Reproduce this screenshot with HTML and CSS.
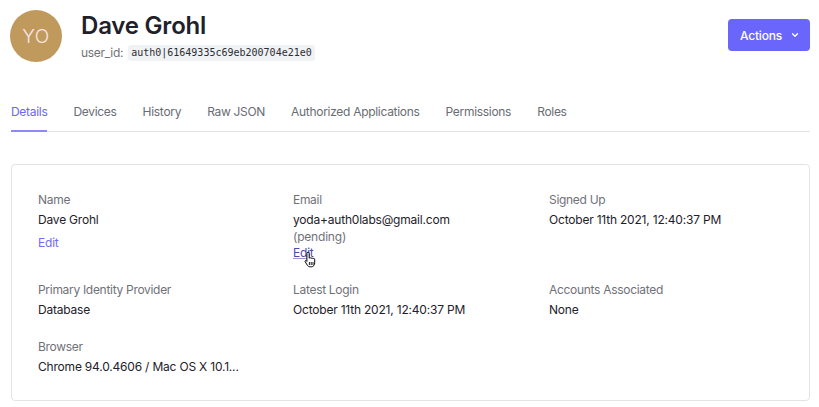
FILE: index.html
```html
<!DOCTYPE html>
<html>
<head>
<meta charset="utf-8">
<link rel="stylesheet" href="styles.css">
</head>
<body>
<div class="page">
  <header class="header">
    <div class="user">
      <div class="avatar">YO</div>
      <div class="user-text">
        <h1 class="user-name">Dave Grohl</h1>
        <div class="user-id"><span class="uid-label">user_id:</span><code class="uid-code">auth0|61649335c69eb200704e21e0</code></div>
      </div>
    </div>
    <button class="actions">Actions
      <svg class="chev" width="10" height="10" viewBox="0 0 10 10"><path d="M2.5 3.8 L5 6.2 L7.5 3.8" fill="none" stroke="#fff" stroke-width="1.3" stroke-linecap="round" stroke-linejoin="round"/></svg>
    </button>
  </header>

  <nav class="tabs">
    <a class="tab active">Details</a>
    <a class="tab">Devices</a>
    <a class="tab">History</a>
    <a class="tab">Raw JSON</a>
    <a class="tab">Authorized Applications</a>
    <a class="tab">Permissions</a>
    <a class="tab">Roles</a>
  </nav>

  <section class="card">
    <div class="grid">
      <div class="field">
        <div class="label">Name</div>
        <div class="value">Dave Grohl</div>
        <a class="edit edit-gap">Edit</a>
      </div>
      <div class="field">
        <div class="label">Email</div>
        <div class="value">yoda+auth0labs@gmail.com</div>
        <div class="pending">(pending)</div>
        <a class="edit hover">Edit
          <svg class="cursor" width="14" height="17" viewBox="0 0 14 17"><path d="M4 1.2 C4.8 1.2 5.2 1.7 5.2 2.4 L5.2 7.2 C5.6 6.6 6.8 6.6 7.1 7.4 C7.5 6.8 8.7 6.9 8.9 7.7 C9.3 7.2 10.6 7.3 10.7 8.3 L10.7 11.8 C10.7 14 9.4 15.8 7.3 15.8 L6.1 15.8 C4.8 15.8 4 15.2 3.3 14.2 L1.1 10.6 C0.7 9.9 1.6 9.1 2.3 9.7 L2.9 10.4 L2.9 2.4 C2.9 1.7 3.3 1.2 4 1.2 Z" fill="#fff" stroke="#000" stroke-width="1" stroke-linejoin="round"/><path d="M5.4 11 L5.4 14 M7.2 11 L7.2 14 M9 11 L9 14" stroke="#000" stroke-width="0.9"/></svg>
        </a>
      </div>
      <div class="field">
        <div class="label">Signed Up</div>
        <div class="value">October 11th 2021, 12:40:37 PM</div>
      </div>
      <div class="field">
        <div class="label">Primary Identity Provider</div>
        <div class="value">Database</div>
      </div>
      <div class="field">
        <div class="label">Latest Login</div>
        <div class="value">October 11th 2021, 12:40:37 PM</div>
      </div>
      <div class="field">
        <div class="label">Accounts Associated</div>
        <div class="value">None</div>
      </div>
      <div class="field">
        <div class="label">Browser</div>
        <div class="value">Chrome 94.0.4606 / Mac OS X 10.1...</div>
      </div>
    </div>
  </section>
</div>
</body>
</html>
```
FILE: styles.css
```css
* { box-sizing: border-box; }
html, body { margin: 0; padding: 0; background: #fff; }
body {
  font-family: Inter, "Noto Sans", sans-serif;
  color: #1e212a;
  font-size: 12px;
}
.page { padding: 10px 9px 0 11px; }

.header { display: flex; justify-content: space-between; align-items: flex-start; }
.user { display: flex; align-items: center; gap: 19px; margin-left: -1px; }
.avatar {
  width: 52px; height: 52px; border-radius: 50%;
  background: #c09a5c; color: #fbe6e6;
  display: flex; align-items: center; justify-content: center;
  font-size: 19px; font-weight: 300; letter-spacing: 0.5px;
}
.user-name {
  margin: 0; font-size: 24px; font-weight: 600; line-height: 28px;
  letter-spacing: -0.2px; color: #1e212a;
}
.user-id { display: flex; align-items: center; gap: 5px; margin-top: 5px; }
.uid-label { color: #6f7178; font-size: 12px; letter-spacing: -0.3px; }
.uid-code {
  font-family: "DejaVu Sans Mono", "Liberation Mono", monospace;
  font-size: 10px; background: #f1f2f4; color: #2a2d35;
  padding: 2px 3px; border-radius: 3px; line-height: 12px;
}
.actions {
  margin-top: 9px;
  display: flex; align-items: center; gap: 8px;
  background: #6b66fb; color: #fff; border: none;
  border-radius: 4px; height: 32px; padding: 0 10px 0 12px;
  font-family: Inter, sans-serif; font-size: 12px; font-weight: 500;
  letter-spacing: -0.2px;
}
.chev { display: block; }

.tabs {
  display: flex; gap: 26px;
  margin-top: 37px;
  border-bottom: 1px solid #e3e4e6;
}
.tab {
  color: #6a6c73; font-size: 12px; letter-spacing: -0.3px; line-height: 16px;
  padding: 5px 0 10px 0;
  border-bottom: 2px solid transparent; margin-bottom: -1px;
}
.tab.active { color: #6b66f0; border-bottom-color: #8e8af5; }

.card {
  margin-top: 32px;
  border: 1px solid #e3e4e6; border-radius: 4px;
  padding: 27px 26px 27px 26px;
  height: 237px;
}
.grid {
  display: grid;
  grid-template-columns: 255px 256px 1fr;
  row-gap: 20px;
}
.field { display: flex; flex-direction: column; align-items: flex-start; }
.label { color: #6f7178; font-size: 12px; letter-spacing: -0.3px; line-height: 16px; }
.value { color: #1e212a; font-size: 12px; letter-spacing: -0.2px; line-height: 18px; margin-top: 3px; }
.pending { color: #6f7178; font-size: 12px; letter-spacing: -0.2px; line-height: 16px; }
.edit { color: #716bf0; font-size: 12px; letter-spacing: -0.2px; line-height: 16px; }
.edit-gap { margin-top: 6px; }
.edit.hover { position: relative; margin-bottom: 1px; color: #4f4aa8; text-decoration: underline; text-decoration-color: #9c98d8; }
.cursor { position: absolute; left: 11px; top: 6px; }
```
